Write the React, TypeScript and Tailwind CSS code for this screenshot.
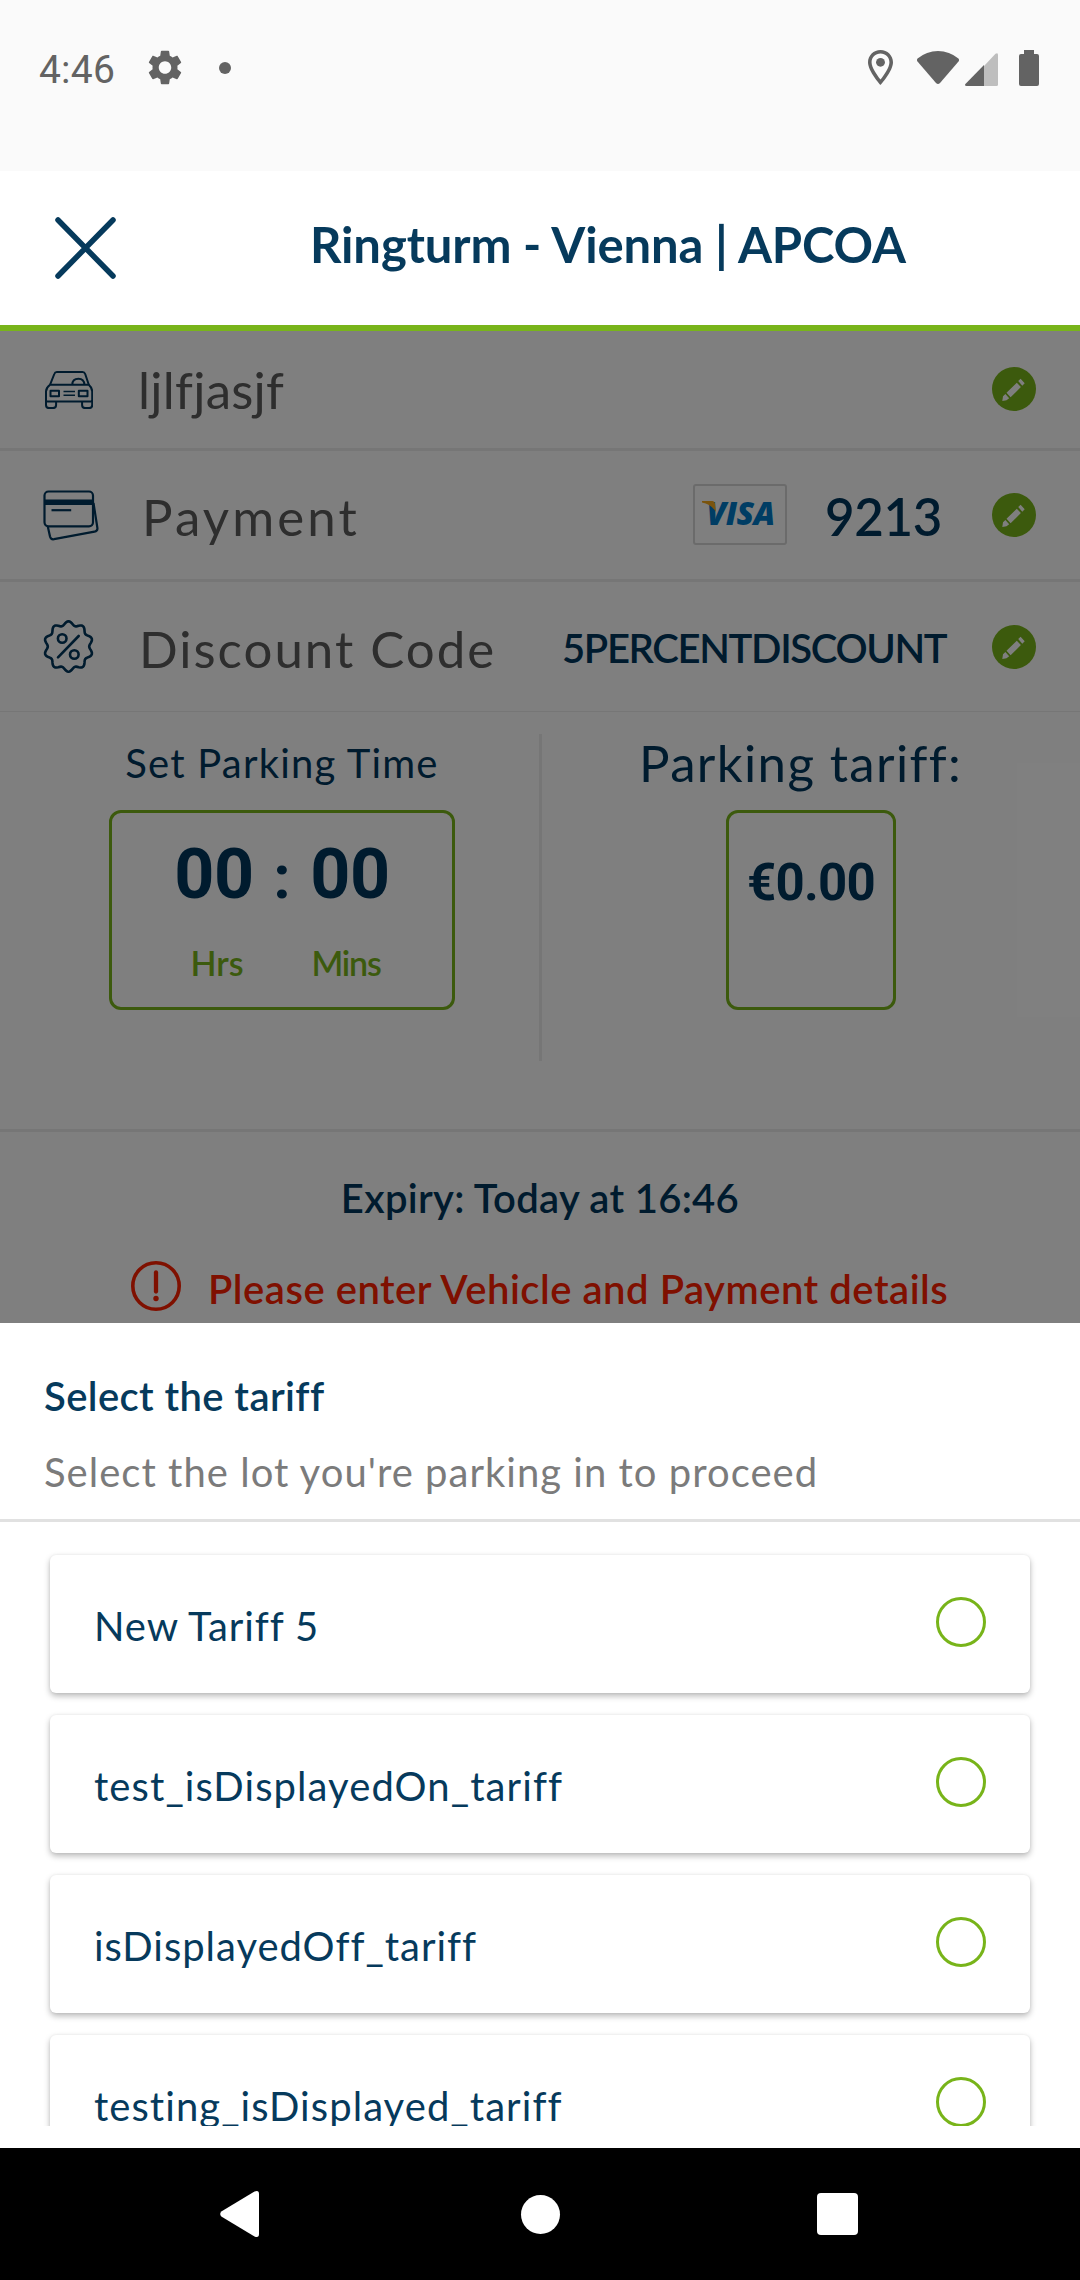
import type { ReactNode } from "react";

const NAVY = "#00365c";

function StatusBar() {
  return (
    <div className="flex h-[171px] items-start bg-[#fafafa] text-[#636363]">
      <div className="flex h-[135px] w-full items-center pl-[39px] pr-[41px]">
        <span className="mt-[5px] w-[109px] font-['Roboto',sans-serif] text-[39px] leading-none tracking-[0.200px]">4:46</span>
        <svg className="h-[35px] w-[34px]" viewBox="2.2 2 19.6 20" preserveAspectRatio="none" fill="currentColor">
          <path d="M19.14 12.94c.04-.3.06-.61.06-.94 0-.32-.02-.64-.07-.94l2.03-1.58c.18-.14.23-.41.12-.61l-1.92-3.32c-.12-.22-.37-.29-.59-.22l-2.39.96c-.5-.38-1.03-.7-1.62-.94l-.36-2.54c-.04-.24-.24-.41-.48-.41h-3.84c-.24 0-.43.17-.47.41l-.36 2.54c-.59.24-1.13.57-1.62.94l-2.39-.96c-.22-.08-.47 0-.59.22L2.74 8.87c-.12.21-.08.47.12.61l2.03 1.58c-.05.3-.09.63-.09.94s.02.64.07.94l-2.03 1.58c-.18.14-.23.41-.12.61l1.92 3.32c.12.22.37.29.59.22l2.39-.96c.5.38 1.03.7 1.62.94l.36 2.54c.05.24.24.41.48.41h3.84c.24 0 .44-.17.47-.41l.36-2.54c.59-.24 1.13-.56 1.62-.94l2.39.96c.22.08.47 0 .59-.22l1.92-3.32c.12-.22.07-.47-.12-.61l-2.01-1.58zM12 15.6c-1.98 0-3.6-1.62-3.6-3.6s1.62-3.6 3.6-3.6 3.6 1.62 3.6 3.6-1.62 3.6-3.6 3.6z" />
        </svg>
        <span className="ml-[37px] size-3 rounded-full bg-current" />
        <svg className="ml-auto h-[35px] w-[25px]" viewBox="5 2 14 20" preserveAspectRatio="none" fill="currentColor">
          <path d="M12 2C8.13 2 5 5.13 5 9c0 5.25 7 13 7 13s7-7.75 7-13c0-3.87-3.13-7-7-7zM7 9c0-2.76 2.24-5 5-5s5 2.24 5 5c0 2.88-2.88 7.19-5 9.88C9.92 16.21 7 11.85 7 9z" />
          <circle cx="12" cy="9" r="2.5" />
        </svg>
        <svg className="ml-[24px] h-[33px] w-[42px]" viewBox="0 0 42 33" fill="currentColor">
          <path d="M0.6 7.6Q9.5 0 21 0T41.4 7.6Q42.6 9 41.5 10.5L23 32Q21 34 19 32L0.5 10.5Q-.6 9 .6 7.6Z" />
        </svg>
        <svg className="mt-[3px] ml-[6px] h-[33px] w-[33px]" viewBox="0 0 33 33" fill="currentColor">
          <path d="M19 13 30.5.8Q33-.8 33 2V31.5Q33 33 31.5 33H19Z" opacity=".4" />
          <path d="M19 12V33H1.500Q-.7 33 .4 31Z" />
        </svg>
        <svg className="ml-[21px] h-[36px] w-[20px]" viewBox="0 0 20 36" fill="currentColor">
          <path d="M5 0h10v4h3q2 0 2 2v28q0 2-2 2H2q-2 0-2-2V6q0-2 2-2h3Z" />
        </svg>
      </div>
    </div>
  );
}

function Header() {
  return (
    <header className="flex h-[160px] items-center border-b-[6px] border-[#78b41a] bg-white pl-[55px]">
      <svg className="mt-[-1px] h-[62px] w-[61px]" viewBox="0 0 61 62" fill="none" stroke="#063a5c" strokeWidth="5.500" strokeLinecap="round">
        <path d="M3 3 58 59M58 3 3 59" />
      </svg>
      <h1 className="mt-[-8px] ml-[194px] whitespace-nowrap text-[49px] leading-none font-bold tracking-[-0.120px] text-[#063a5c]">
        Ringturm - Vienna | APCOA
      </h1>
    </header>
  );
}

function CarIcon() {
  return (
    <svg className="h-[38px] w-[48px]" viewBox="45.500 369.500 48 38" fill="none" stroke={NAVY} strokeWidth="2" strokeLinejoin="round">
      <path d="M50.500 383.300 54.800 372.500Q55.500 370.600 57.300 370.600H83Q85 370.600 85.700 372.500L89.300 383.300" />
      <path d="M50.500 383.300H89.300Q92.700 386.500 92.700 390V398.500Q92.700 400 91.200 400H48Q46.500 400 46.500 398.500V390Q46.500 386.500 50.500 383.300Z" />
      <path d="M46.500 398.500V403.500Q46.500 406.600 49.500 406.600H53.500Q56.600 406.600 56.600 403.500V400M82.600 400V403.500Q82.600 406.600 85.600 406.600H89.700Q92.700 406.600 92.700 403.500V398.500" />
      <path d="M51 389.200H59.500V394.800H51ZM79.300 389.200H88V394.800H79.300Z" />
      <path d="M64 390H75.500M64 393.800H75.500" strokeWidth="1.500" />
      <path d="M72.800 383.300Q72.800 377.300 79 377.300 84.500 377.300 85 383.300" />
    </svg>
  );
}

function CardsIcon() {
  return (
    <svg className="h-[51px] w-[56px]" viewBox="43.500 490 56 51" fill="none" stroke={NAVY} strokeWidth="2.200" strokeLinejoin="round">
      <rect x="45" y="491.500" width="48.500" height="34.800" rx="4" />
      <path d="M45 502.200H93.500" strokeWidth="5.500" />
      <path d="M52 510.200H71.700" strokeWidth="2.200" />
      <path d="M48.300 526.500 50.500 536.500Q51.300 539.700 54.500 539.200L95 531.700Q98.300 530.900 97.900 528L94 503" />
    </svg>
  );
}

const badgeOutline =
  Array.from({ length: 121 }, (_, i) => {
    const a = (i * Math.PI) / 60;
    const r = 22.6 + 1.9 * Math.cos(10 * a);
    return `${i ? "L" : "M"}${(25.5 + r * Math.sin(a)).toFixed(2)} ${(26.5 - r * 1.03 * Math.cos(a)).toFixed(2)}`;
  }).join("") + "Z";

function DiscountIcon() {
  return (
    <svg className="h-[53px] w-[51px]" viewBox="0 0 51 53" fill="none" stroke={NAVY} strokeWidth="2.600" strokeLinejoin="round" strokeLinecap="round">
      <path d={badgeOutline} />
      <path d="M15 37.300 35.700 16" />
      <circle cx="19.200" cy="18.500" r="4.300" />
      <circle cx="31.300" cy="34.500" r="4.300" />
    </svg>
  );
}

function EditIcon() {
  return (
    <svg className="h-11 w-11 shrink-0" viewBox="0 0 44 44">
      <circle cx="22" cy="22" r="22" fill="#78b41a" />
      <path fill="#fff" d="M28.600 11.700 32.700 16.300 30.300 18.700 26.200 14ZM24.800 15.700 28.900 20 18.600 30.300 14.500 25.700ZM13.400 27 17.200 31.300 14.500 33.300 10.300 34 11 29.300Z" />
    </svg>
  );
}

function VisaBadge() {
  return (
    <div className="relative flex h-[61px] w-[94px] justify-center rounded-[3px] border-2 border-[#d6d6d6]">
      <span className="mt-[9px] ml-px font-['Open_Sans',sans-serif] text-[32px] leading-[36px] font-extrabold tracking-[-0.500px] text-[#007ac8] italic">VISA</span>
      <svg className="absolute top-[15px] left-[7px] h-[11px] w-[14px]" viewBox="0 0 14 11">
        <path d="M0 0H10.500Q12.500 0 13 2.500L14 11Q9 3 0 1.500Z" fill="#f5a81c" />
      </svg>
    </div>
  );
}

function TimeUnit({ value, label }: { value: string; label: ReactNode }) {
  return (
    <div className="flex w-20 flex-col items-center">
      <span className="font-['Roboto',sans-serif] text-[70px] leading-[68px] font-bold tracking-[-0.500px]">{value}</span>
      {label}
    </div>
  );
}

const tariffs: { name: string; tracking: string }[] = [
  { name: "New Tariff 5", tracking: "tracking-[0.900px]" },
  { name: "test_isDisplayedOn_tariff", tracking: "tracking-[1.090px]" },
  { name: "isDisplayedOff_tariff", tracking: "tracking-[0.980px]" },
  { name: "testing_isDisplayed_tariff", tracking: "tracking-[1.060px]" },
];

function ParkingForm() {
  return (
    <main className="relative h-[992px] overflow-hidden bg-white text-[#00365c]">
      <div className="flex h-[120px] items-center border-b-[3px] border-[#ececec] pr-11 pl-[45px]">
        <CarIcon />
        <span className="ml-[45px] text-[51px] leading-none tracking-[0.250px] text-[#5c5c5c]">ljlfjasjf</span>
        <div className="mb-px ml-auto"><EditIcon /></div>
      </div>
      <div className="flex h-[131px] items-center border-b-[3px] border-[#ececec] pr-11 pl-[43px]">
        <CardsIcon />
        <span className="mt-[3px] ml-[43px] text-[51px] leading-none tracking-[3.100px] text-[#5c5c5c]">Payment</span>
        <div className="mb-px ml-auto"><VisaBadge /></div>
        <span className="mt-[3px] ml-[38px] w-[167px] text-[51px] leading-none font-semibold tracking-[-0.300px]">9213</span>
        <EditIcon />
      </div>
      <div className="flex h-[130px] items-center border-b border-[#ececec] pr-11 pl-[43px]">
        <DiscountIcon />
        <span className="mt-[4px] ml-[45px] text-[51px] leading-none tracking-[2px] whitespace-nowrap text-[#5c5c5c]">Discount Code</span>
        <span className="mt-[2px] ml-auto w-[430px] text-[40px] leading-none font-semibold tracking-[-1.350px]">5PERCENTDISCOUNT</span>
        <EditIcon />
      </div>

      <section className="flex h-[420px] border-b-[3px] border-[#ececec] pt-[22px]">
        <div className="flex w-[539px] flex-col items-center pl-[25px]">
          <h2 className="mt-[9px] text-[40px] leading-[40px] tracking-[1.200px]">Set Parking Time</h2>
          <div className="mt-[27px] flex h-[200px] w-[346px] justify-center rounded-xl border-[3px] border-[#78b41a] pt-[27px]">
            <TimeUnit value="00" label={<span className="mt-[38px] ml-[6px] text-[34px] leading-[34px] font-semibold text-[#78b41a]">Hrs</span>} />
            <span className="w-[56px] text-center font-['Roboto',sans-serif] text-[62px] leading-[73px] font-bold">:</span>
            <TimeUnit value="00" label={<span className="mt-[38px] mr-[8px] text-[34px] leading-[34px] font-semibold tracking-[-1.200px] text-[#78b41a]">Mins</span>} />
          </div>
        </div>
        <div className="h-[327px] w-[3px] bg-[#ececec]" />
        <div className="flex-1">
          <h2 className="mt-[3px] ml-[97px] text-[51px] leading-[51px] tracking-[1.350px]">Parking tariff:</h2>
          <div className="mt-[22px] ml-[184px] h-[200px] w-[170px] rounded-xl border-[3px] border-[#78b41a] pt-[44px] text-center font-['Roboto',sans-serif] text-[51px] leading-[51px] font-bold tracking-[-0.800px]">
            €0.00
          </div>
        </div>
      </section>

      <p className="mt-[46px] text-center text-[40px] leading-[40px] font-semibold tracking-[0.300px]">Expiry: Today at 16:46</p>
      <div className="mt-[43px] flex items-center pl-[131px] text-[#ff2000]">
        <svg className="size-[50px]" viewBox="0 0 50 50" fill="none" stroke="currentColor" strokeLinecap="round">
          <circle cx="25" cy="25" r="23.200" strokeWidth="3.600" />
          <path d="M25 11.500V30.500" strokeWidth="4.300" />
          <circle cx="25" cy="37.500" r="2.700" fill="currentColor" stroke="none" />
        </svg>
        <span className="mt-[5px] ml-[27px] text-[40px] leading-[40px] font-semibold tracking-[0.520px] whitespace-nowrap">Please enter Vehicle and Payment details</span>
      </div>
      <div className="absolute inset-0 bg-black/50" />
    </main>
  );
}

function TariffSheet() {
  return (
    <section className="h-[825px] bg-white">
      <div className="h-[199px] border-b-[3px] border-[#e1e1e1] pt-[53px] pl-[44px]">
        <h2 className="text-[40px] leading-[40px] font-semibold tracking-[0.400px] text-[#063a5c]">Select the tariff</h2>
        <p className="mt-[36px] text-[40px] leading-[40px] tracking-[1.020px] text-[#7b7b7b]">Select the lot you're parking in to proceed</p>
      </div>
      <div className="flex h-[604px] flex-col gap-[22px] overflow-hidden px-[50px] pt-[33px]">
        {tariffs.map((t) => (
          <div key={t.name} className="flex h-[138px] shrink-0 items-center justify-between rounded-md bg-white pr-[44px] pl-[44px] text-[#063a5c] shadow-[0_3px_6px_rgba(0,0,0,0.28),0_0_3px_rgba(0,0,0,0.06)]">
            <span className={`mt-[4px] text-[40px] leading-none ${t.tracking}`}>{t.name}</span>
            <span className="mb-1 size-[50px] rounded-full border-[3px] border-[#78b41a]" />
          </div>
        ))}
      </div>
    </section>
  );
}

function NavBar() {
  return (
    <nav className="flex h-[132px] items-center bg-black pl-[220px]">
      <svg className="h-[46px] w-[39px]" viewBox="0 0 39 46" fill="#fff">
        <path d="M1.300 20.500 34.500.6Q39-1.200 39 3V43Q39 47.200 34.500 45.400L1.300 25.500Q-.9 23 1.300 20.500Z" />
      </svg>
      <span className="ml-[262px] size-[39px] rounded-full bg-white" />
      <span className="ml-[257px] h-[42px] w-[41px] rounded-[4px] bg-white" />
    </nav>
  );
}

export default function App() {
  return (
    <div className="h-[2280px] w-[1080px] overflow-hidden bg-white font-['Lato',sans-serif] [font-variant-ligatures:none]">
      <StatusBar />
      <Header />
      <ParkingForm />
      <TariffSheet />
      <NavBar />
    </div>
  );
}
